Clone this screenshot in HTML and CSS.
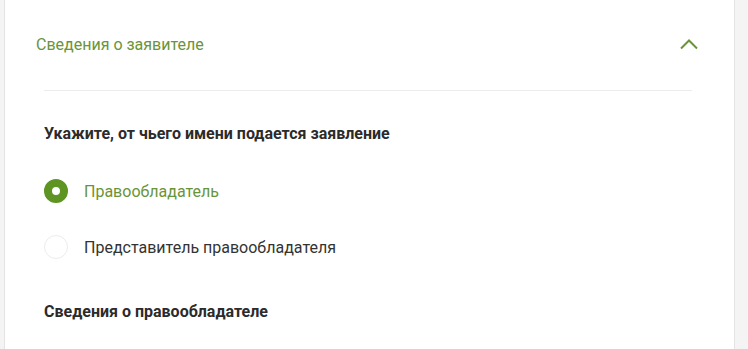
FILE: index.html
```html
<!DOCTYPE html>
<html lang="ru">
<head>
<meta charset="utf-8">
<link rel="stylesheet" href="styles.css">
</head>
<body>
<div class="card">
  <div class="card-header">
    <span class="card-title">Сведения о заявителе</span>
    <svg class="chevron" width="20" height="12" viewBox="0 0 20 12"><polyline points="2,10.5 10,2.5 18,10.5" fill="none" stroke="#6a9438" stroke-width="2"/></svg>
  </div>
  <div class="card-body">
    <div class="divider"></div>
    <h3 class="section-title">Укажите, от чьего имени подается заявление</h3>
    <div class="radio-group">
      <label class="radio checked"><span class="radio-circle"></span><span class="radio-label">Правообладатель</span></label>
      <label class="radio"><span class="radio-circle"></span><span class="radio-label">Представитель правообладателя</span></label>
    </div>
    <h3 class="section-title second">Сведения о правообладателе</h3>
  </div>
</div>
</body>
</html>
```

FILE: styles.css
```css
html, body {
  margin: 0;
  padding: 0;
  background: #f4f4f4;
  font-family: Roboto, "Noto Sans", sans-serif;
}
.card {
  box-sizing: border-box;
  margin-left: 4px;
  width: 731px;
  min-height: 100vh;
  background: #fff;
  border-left: 1px solid #e4e4e4;
  border-right: 1px solid #e4e4e4;
}
.card-header {
  display: flex;
  align-items: center;
  justify-content: space-between;
  height: 90px;
  padding: 0 35px 0 31px;
}
.card-title {
  font-size: 16px;
  color: #6a9438;
  margin-top: -2px;
}
.chevron {
  margin-top: -2px;
}
.card-body {
  padding: 0 42px 0 39px;
}
.divider {
  height: 1px;
  background: #ececec;
}
.section-title {
  margin: 0;
  font-size: 16px;
  font-weight: 700;
  color: #2b2b2b;
  padding-top: 33px;
  line-height: 19px;
}
.section-title.second {
  padding-top: 43px;
}
.radio-group {
  display: flex;
  flex-direction: column;
  gap: 32px;
  padding-top: 36px;
}
.radio {
  display: flex;
  align-items: center;
  gap: 16px;
  height: 24px;
}
.radio-circle {
  box-sizing: border-box;
  width: 24px;
  height: 24px;
  border-radius: 50%;
  border: 1px solid #ececec;
  background: #fff;
}
.radio.checked .radio-circle {
  border: 8px solid #5e9422;
}
.radio-label {
  font-size: 16px;
  color: #333;
}
.radio.checked .radio-label {
  color: #6a9438;
}
```
